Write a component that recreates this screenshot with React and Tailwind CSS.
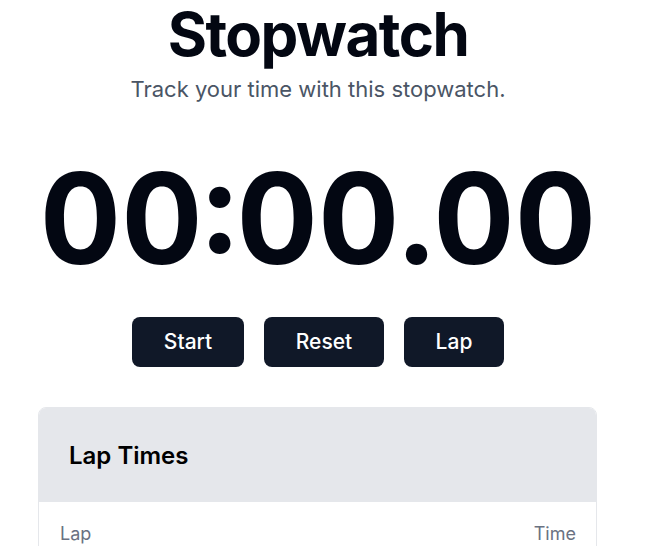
import React from "react";

export default function App() {
  return (
    <div className="min-h-screen bg-white" style={{ fontFamily: "Inter, 'Noto Sans', sans-serif" }}>
      <div className="w-[636px] flex flex-col items-center pt-[4px]">
        <h1 className="text-6xl font-bold text-[#030712] tracking-tight leading-none">Stopwatch</h1>
        <p className="mt-[10px] text-[22px] leading-[30px] text-gray-600">Track your time with this stopwatch.</p>
        <div className="mt-[51px] text-[126px] font-bold text-[#030712] leading-none tabular-nums">00:00.00</div>
        <div className="mt-[36px] flex gap-5">
          <button className="h-[50px] w-[112px] rounded-lg bg-gray-900 text-white text-[21px] font-medium">Start</button>
          <button className="h-[50px] w-[120px] rounded-lg bg-gray-900 text-white text-[21px] font-medium">Reset</button>
          <button className="h-[50px] w-[100px] rounded-lg bg-gray-900 text-white text-[21px] font-medium">Lap</button>
        </div>
        <div className="mt-10 w-[559px] rounded-lg border border-gray-200 overflow-hidden self-start ml-[38px]">
          <div className="bg-gray-200 pl-[30px] pr-8 pt-8 pb-[30px]">
            <h2 className="text-2xl font-semibold text-black leading-8">Lap Times</h2>
          </div>
          <div className="flex justify-between pl-[21px] pr-5 pt-[18px] pb-3 text-lg text-gray-500">
            <span>Lap</span>
            <span>Time</span>
          </div>
        </div>
      </div>
    </div>
  );
}
